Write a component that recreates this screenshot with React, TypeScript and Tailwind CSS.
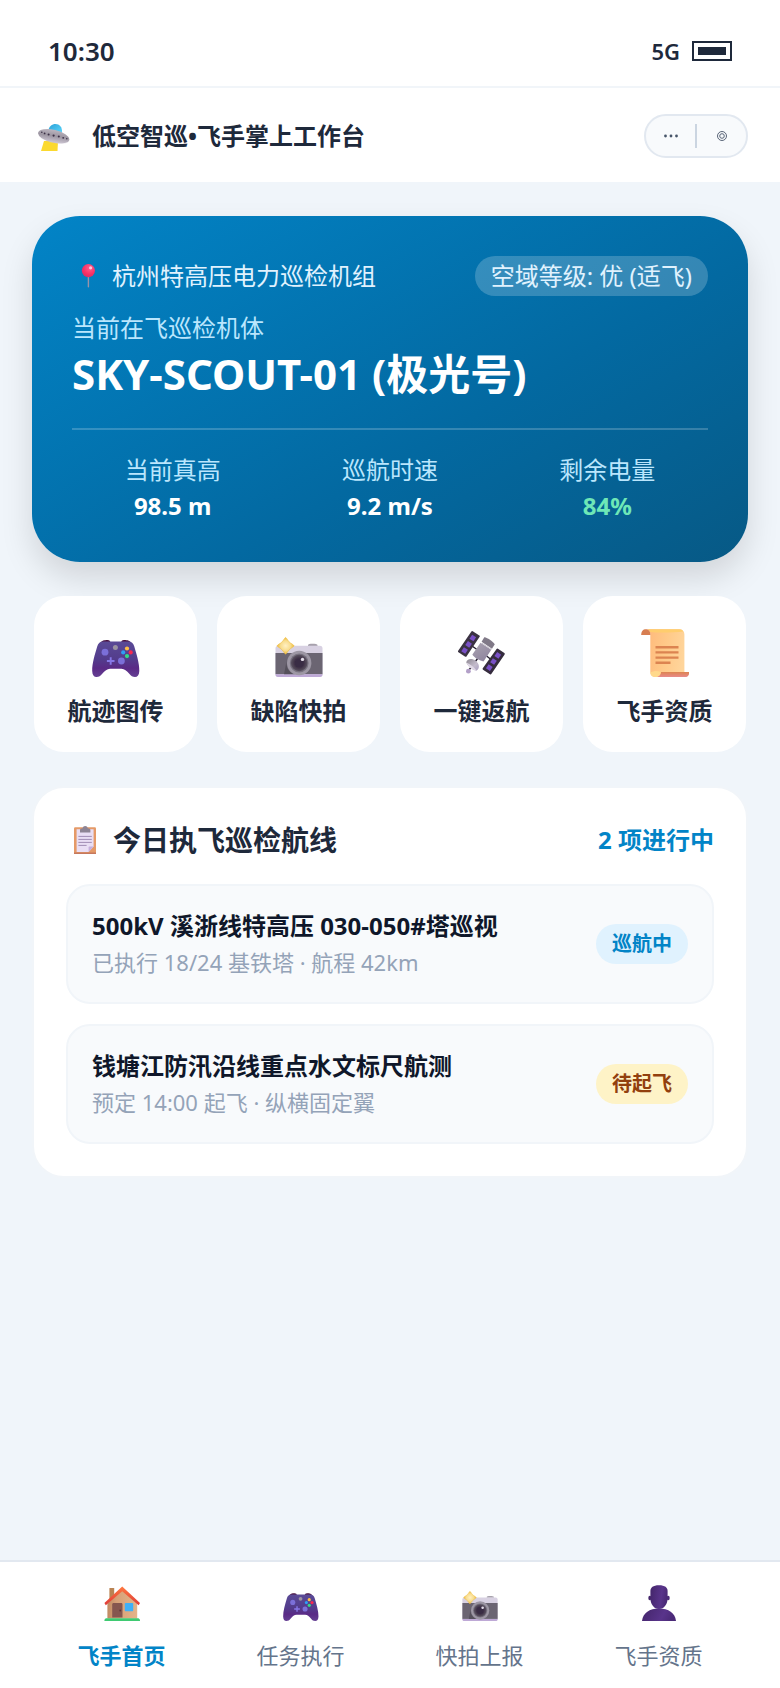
import React, { useState } from 'react';

type IconProps = { className?: string };

const UfoIcon = ({ className }: IconProps) => (
  <svg viewBox="0 0 32 32" className={className} aria-hidden="true">
    <defs>
      <linearGradient id="ufoDome" x1="0" y1="0" x2="1" y2="1">
        <stop offset="0" stopColor="#2b9fd6" />
        <stop offset="1" stopColor="#5fdcff" />
      </linearGradient>
      <linearGradient id="ufoDisc" x1="0" y1="0" x2="0.2" y2="1">
        <stop offset="0" stopColor="#c2bcc6" />
        <stop offset="0.55" stopColor="#9c95a1" />
        <stop offset="1" stopColor="#c9c2cf" />
      </linearGradient>
    </defs>
    <path d="M6 21 L20 21 L19.5 31 L3 31 Z" fill="#fbd92f" />
    <path d="M10 11.5 C11 6 14 4 17.5 4 C21.5 4 24.3 7 24 12 L23.5 15 L10 13 Z" fill="url(#ufoDome)" />
    <ellipse cx="15.7" cy="16.3" rx="16" ry="6.4" transform="rotate(13 15.7 16.3)" fill="url(#ufoDisc)" />
    <path d="M1 16.5 C5 21 19 26 30 22.5 C25 25 8 24 1 16.5 Z" fill="#ddd7e0" />
    <g fill="#3b3046">
      <circle cx="3.8" cy="12.2" r="0.8" />
      <circle cx="6.6" cy="13.4" r="0.9" />
      <circle cx="10.6" cy="14.6" r="1" />
      <circle cx="15.6" cy="15.6" r="1.1" />
      <circle cx="20.8" cy="16.6" r="1" />
      <circle cx="25.2" cy="17.8" r="0.9" />
      <circle cx="28.8" cy="18.8" r="0.8" />
    </g>
  </svg>
);

const PinIcon = ({ className }: IconProps) => (
  <svg viewBox="0 0 24 24" className={className} aria-hidden="true">
    <defs>
      <radialGradient id="pinHead" cx="0.6" cy="0.3" r="0.8">
        <stop offset="0" stopColor="#ff5d90" />
        <stop offset="0.6" stopColor="#f92f63" />
        <stop offset="1" stopColor="#c92e6b" />
      </radialGradient>
    </defs>
    <rect x="11.7" y="12" width="1.4" height="11.5" rx="0.7" fill="#9a93a8" />
    <circle cx="12.4" cy="6.6" r="6.6" fill="url(#pinHead)" />
    <circle cx="14.6" cy="3.8" r="1.6" fill="#ffc4d8" />
  </svg>
);

const GamepadIcon = ({ className }: IconProps) => (
  <svg viewBox="0 0 48 48" className={className} aria-hidden="true">
    <defs>
      <linearGradient id="padBody" x1="0" y1="0" x2="0" y2="1">
        <stop offset="0" stopColor="#5a4a96" />
        <stop offset="0.5" stopColor="#533c8c" />
        <stop offset="0.75" stopColor="#5a2a86" />
        <stop offset="1" stopColor="#653f93" />
      </linearGradient>
    </defs>
    <path d="M8 15 C9 11.5 12 11 15.5 11 C17.5 11 18.3 12 18.5 14 Z" fill="#4a123f" />
    <path d="M39.5 15 C38.5 11.5 35.5 11 32 11 C30 11 29.2 12 29 14 Z" fill="#4a123f" />
    <path
      d="M11 12.5 H36.5 C39.5 12.5 41.2 14 42.3 17.5 C44.5 25 47.5 34.5 47.3 42 C47.2 46 45.5 48 43 48 C40.5 48 39 46.8 37.5 45 C34.5 42 32.5 39.8 29.5 39.8 H18 C15 39.8 13 42 10 45 C8.5 46.8 7 48 4.5 48 C2 48 0.3 46 0.2 42 C0 34.5 3 25 5.2 17.5 C6.3 14 8 12.5 11 12.5 Z"
      fill="url(#padBody)"
    />
    <circle cx="13" cy="23.2" r="3.4" fill="#7b6fd8" />
    <circle cx="29.4" cy="32" r="3.4" fill="#7b6fd8" />
    <path d="M18.7 28.2 V35.8 M14.9 32 H22.5" stroke="#8677e6" strokeWidth="1.9" />
    <circle cx="23.4" cy="18.4" r="2.5" fill="#9a93a1" />
    <circle cx="35" cy="19.5" r="2.1" fill="#ffbe45" />
    <circle cx="31.2" cy="23.4" r="2.1" fill="#2f9df5" />
    <circle cx="38.7" cy="23.4" r="2.1" fill="#f8284f" />
    <circle cx="35" cy="27.1" r="2.1" fill="#35da86" />
  </svg>
);

const CameraIcon = ({ className }: IconProps) => (
  <svg viewBox="0 0 48 48" className={className} aria-hidden="true">
    <defs>
      <radialGradient id="camFlash">
        <stop offset="0" stopColor="#fff0c4" />
        <stop offset="0.6" stopColor="#f8dc8c" />
        <stop offset="1" stopColor="#efbc3c" />
      </radialGradient>
      <radialGradient id="camLens">
        <stop offset="0" stopColor="#5c4868" />
        <stop offset="0.6" stopColor="#413448" />
        <stop offset="1" stopColor="#5b5361" />
      </radialGradient>
    </defs>
    <path d="M33 17 V16 C33 15.2 35 14.8 37.5 14.8 C40 14.8 42.5 15.2 42.5 16 V17 Z" fill="#a7a1ac" />
    <rect x="0.5" y="16.8" width="47" height="31" rx="2.6" fill="#d8d1e2" />
    <rect x="0.5" y="24" width="47" height="21.2" fill="#6b6572" />
    <path d="M0.5 45.2 H47.5 C47.5 47 46.5 48 45 48 H3 C1.5 48 0.5 47 0.5 45.2 Z" fill="#bea9d6" />
    <path d="M12 30 C10 38 14 44 20 45.2 H9 Z" fill="#55505b" />
    <circle cx="24.2" cy="34" r="12.2" fill="#9d97a4" />
    <circle cx="24.2" cy="34" r="9.4" fill="#77717f" />
    <circle cx="24.2" cy="34" r="8.3" fill="url(#camLens)" />
    <circle cx="24.2" cy="34" r="4.6" fill="#392c44" />
    <circle cx="27.5" cy="30.4" r="1.7" fill="#e4dee9" />
    <path
      d="M10.6 8.5 C11.3 8.5 12.4 10.8 14 12.8 C15.8 14.6 19 15.8 19 16.8 C19 17.8 15.8 19 14 21 C12.4 22.8 11.3 25 10.6 25 C9.9 25 8.8 22.8 7.2 21 C5.4 19 2.2 17.8 2.2 16.8 C2.2 15.8 5.4 14.6 7.2 12.8 C8.8 10.8 9.9 8.5 10.6 8.5 Z"
      fill="url(#camFlash)"
      stroke="#eebd45"
      strokeWidth="0.6"
    />
  </svg>
);

const SatelliteIcon = ({ className }: IconProps) => (
  <svg viewBox="0 0 48 48" className={className} aria-hidden="true">
    <defs>
      <linearGradient id="satBody" x1="0" y1="0" x2="0.5" y2="1">
        <stop offset="0" stopColor="#aaa3b0" />
        <stop offset="1" stopColor="#9187a0" />
      </linearGradient>
      <linearGradient id="satDish" x1="0" y1="0" x2="1" y2="1">
        <stop offset="0" stopColor="#8d8891" />
        <stop offset="0.6" stopColor="#c4bccc" />
        <stop offset="1" stopColor="#a89dc0" />
      </linearGradient>
    </defs>
    <path d="M14 17 L19 20.5 M28 26.5 L33 30.5 M20 29 L17 33 M14 37 L11 41" stroke="#221b2c" strokeWidth="1.4" />
    <path d="M14.2 3 L20.8 7.3 L7.8 26.8 L1 22.3 Z" fill="#3b3343" stroke="#3b3343" strokeWidth="2" strokeLinejoin="round" />
    <path d="M39.4 20.5 L45.8 24.9 L32.5 44.5 L25.6 39.9 Z" fill="#352c3e" stroke="#352c3e" strokeWidth="2" strokeLinejoin="round" />
    <g fill="#7950c6">
      <rect x="12.4" y="6.6" width="4.8" height="4.8" transform="rotate(34 14.8 9)" />
      <rect x="8.2" y="12.9" width="4.8" height="4.8" transform="rotate(34 10.6 15.3)" />
      <rect x="4.2" y="19.1" width="4.8" height="4.8" transform="rotate(34 6.6 21.5)" />
      <rect x="37.4" y="23.9" width="4.8" height="4.8" transform="rotate(34 39.8 26.3)" />
      <rect x="33.1" y="30.1" width="4.8" height="4.8" transform="rotate(34 35.5 32.5)" />
      <rect x="28.9" y="36.3" width="4.8" height="4.8" transform="rotate(34 31.3 38.7)" />
    </g>
    <path d="M26.3 8.2 C28 7.6 37 13.5 36.6 15.5 L34 19.8 L23.6 12.8 Z" fill="#807987" />
    <path d="M22.5 13.8 L33.3 20.8 L25.5 32.4 C22 32 16 28.5 14.4 25.5 Z" fill="url(#satBody)" />
    <path d="M24 14.2 L33.6 20.4" stroke="#cbc5d0" strokeWidth="1" />
    <path d="M8.2 33.6 C8.8 29.5 14 28.8 18 32 C21.5 35 22 39.5 18.4 41.8 C14 41 10.5 38 8.2 33.6 Z" fill="url(#satDish)" />
    <path d="M8.2 33.6 C10.5 38 14 41 18.4 41.8 C17 39 12 35 8.2 33.6 Z" fill="#e0d9e6" />
    <circle cx="10.4" cy="42.2" r="2.4" fill="#b3a0c8" />
  </svg>
);

const ScrollIcon = ({ className }: IconProps) => (
  <svg viewBox="0 0 48 48" className={className} aria-hidden="true">
    <defs>
      <linearGradient id="scrollPaper" x1="0" y1="0.3" x2="1" y2="0.5">
        <stop offset="0" stopColor="#ffba7c" />
        <stop offset="0.5" stopColor="#ffc988" />
        <stop offset="1" stopColor="#ffd59b" />
      </linearGradient>
      <linearGradient id="scrollCurl" x1="0" y1="0" x2="0" y2="1">
        <stop offset="0" stopColor="#dd8450" />
        <stop offset="1" stopColor="#e88a8a" />
      </linearGradient>
    </defs>
    <path d="M5 0.2 H38 C41.5 0.2 43.4 2.2 43.4 5.5 V44 L18 47.9 H14 C11 47.9 9.3 46 9.3 43 V5.5 C9.3 2.5 8 0.2 5 0.2 Z" fill="url(#scrollPaper)" />
    <path d="M6 0.2 H38 C40 0.2 41.5 1 42.4 2.4 C33 3.5 20 4 9.2 3 C8.6 1.5 7.6 0.4 6 0.2 Z" fill="#ffcd6d" />
    <path d="M0.2 6 C0.2 2 2 0.2 5 0.2 C8 0.2 9.4 2.5 9.4 6 Z" fill="#d77e51" />
    <path d="M19.8 43 H48.3 C48.3 46.5 46.5 48 44 48 H14 C17.5 48 19.6 46.5 19.8 43 Z" fill="url(#scrollCurl)" />
    <path d="M14 48 C11.5 48 9.5 46.5 9.3 43.5 C13 41.5 17 41.5 19.8 43 C19.6 46.5 17.5 48 14 48 Z" fill="#ffd98c" />
    <path d="M14.5 18.3 H37.5 M14.5 23.4 H37.5 M14.5 28.6 H37.5 M14.5 33.8 H29.5" stroke="#dc8450" strokeWidth="2.4" />
  </svg>
);

const ClipboardIcon = ({ className }: IconProps) => (
  <svg viewBox="0 0 28 28" className={className} aria-hidden="true">
    <rect x="3" y="1.2" width="22" height="26.8" rx="1.2" fill="#e59a68" />
    <rect x="3" y="26.5" width="22" height="1.5" fill="#c6785d" />
    <path d="M5.6 3.2 H22.6 V20.5 L17.6 26 H5.6 Z" fill="#e9def4" />
    <path d="M22.6 20.5 L17.6 26 V21.5 C17.6 20.8 18 20.5 18.6 20.5 Z" fill="#c5aedc" />
    <path d="M9 6.6 V4.2 C9 2.8 10 2.4 11.6 2.2 C12 0.8 12.8 0 14.2 0 C15.6 0 16.4 0.8 16.8 2.2 C18.4 2.4 19.4 2.8 19.4 4.2 V6.6 Z" fill="#8d8494" />
    <path d="M7.4 10.4 H20.8 M7.4 13.4 H20.8 M7.4 16.4 H20.8 M7.4 19.4 H15.6" stroke="#a08cb4" strokeWidth="1" />
  </svg>
);

const HomeIcon = ({ className }: IconProps) => (
  <svg viewBox="0 0 36 36" className={className} aria-hidden="true">
    <defs>
      <linearGradient id="homeWall" x1="0" y1="0" x2="1" y2="0">
        <stop offset="0" stopColor="#c08a62" />
        <stop offset="0.3" stopColor="#d6a077" />
        <stop offset="1" stopColor="#e4b489" />
      </linearGradient>
      <linearGradient id="homeRoof" x1="0" y1="0" x2="0" y2="1">
        <stop offset="0" stopColor="#ff7a40" />
        <stop offset="1" stopColor="#de3a38" />
      </linearGradient>
    </defs>
    <rect x="5.4" y="3" width="4.8" height="14" rx="0.6" fill="#b98353" />
    <path d="M18.2 4.5 L33.2 18.5 V33.6 H3.4 V18.5 Z" fill="url(#homeWall)" />
    <path d="M18.2 1.5 L36 18 L34.6 20.2 L18.2 6.2 L1.8 20.2 L0.4 18 Z" fill="url(#homeRoof)" />
    <path d="M8.2 19.5 C8.2 18.5 8.8 18 9.6 18 H17 C18 18 18.5 18.5 18.5 19.5 V32.4 H8.2 Z" fill="#85564f" />
    <circle cx="16.2" cy="25.5" r="0.9" fill="#5f3437" />
    <rect x="20.8" y="18" width="8.4" height="8.2" rx="0.8" fill="#3fb0f7" />
    <path d="M2 33.2 H34.4 C35.6 33.6 36 34.6 36 36 H0.4 C0.4 34.6 0.8 33.6 2 33.2 Z" fill="#3fca72" />
  </svg>
);

const PersonIcon = ({ className }: IconProps) => (
  <svg viewBox="0 0 36 36" className={className} aria-hidden="true">
    <defs>
      <linearGradient id="personFill" x1="0" y1="0" x2="1" y2="0.2">
        <stop offset="0" stopColor="#43256a" />
        <stop offset="0.7" stopColor="#59348b" />
        <stop offset="1" stopColor="#4b2a78" />
      </linearGradient>
    </defs>
    <path d="M1 36 C2 28 8.5 23.6 18 23.6 C27.5 23.6 34 28 35 36 Z" fill="url(#personFill)" />
    <ellipse cx="8.8" cy="13" rx="1.5" ry="2.2" fill="#43256a" />
    <ellipse cx="27.2" cy="13" rx="1.5" ry="2.2" fill="#4b2a78" />
    <path
      d="M9.4 6 C9.4 2.5 12 0.2 18 0.2 C24 0.2 26.6 2.5 26.6 6 V13.5 C26.6 19 23 24 18 24 C13 24 9.4 19 9.4 13.5 Z"
      fill="url(#personFill)"
    />
  </svg>
);

const stats = [
  { label: '当前真高', value: '98.5 m', color: 'text-white' },
  { label: '巡航时速', value: '9.2 m/s', color: 'text-white' },
  { label: '剩余电量', value: '84%', color: 'text-[#6ee7b7]' },
];

const actions = [
  { label: '航迹图传', icon: GamepadIcon },
  { label: '缺陷快拍', icon: CameraIcon },
  { label: '一键返航', icon: SatelliteIcon },
  { label: '飞手资质', icon: ScrollIcon },
];

const routes = [
  {
    title: '500kV 溪浙线特高压 030-050#塔巡视',
    detail: '已执行 18/24 基铁塔 · 航程 42km',
    status: '巡航中',
    badge: 'bg-[#e0f2fe] text-[#0284c7]',
  },
  {
    title: '钱塘江防汛沿线重点水文标尺航测',
    detail: '预定 14:00 起飞 · 纵横固定翼',
    status: '待起飞',
    badge: 'bg-[#fef3c7] text-[#92400e]',
  },
];

const tabs = [
  { label: '飞手首页', icon: HomeIcon },
  { label: '任务执行', icon: GamepadIcon },
  { label: '快拍上报', icon: CameraIcon },
  { label: '飞手资质', icon: PersonIcon },
];

function App() {
  const [activeTab, setActiveTab] = useState(0);

  return (
    <div className="min-h-screen flex flex-col bg-[#f0f5fa] text-[#1e293b] font-['Noto_Sans','Noto_Sans_CJK_SC',sans-serif]">
      {/* Status bar */}
      <div className="flex items-center justify-between bg-white border-b-2 border-[#f1f5f9] px-12 pt-[31px] pb-[15px]">
        <span className="text-[26px] leading-10 font-semibold">10:30</span>
        <div className="flex items-center gap-3">
          <span className="text-[22px] leading-8 font-semibold">5G</span>
          <div className="w-10 h-5 border-2 border-[#1e293b] p-1">
            <div className="h-full bg-[#1e293b]"></div>
          </div>
        </div>
      </div>

      {/* Header */}
      <header className="flex items-center justify-between bg-white border-b-2 border-[#f0f5fa] px-8 pt-[26px] pb-6">
        <div className="flex items-center gap-[22px] pl-[6px]">
          <UfoIcon className="w-8 h-8" />
          <h1 className="text-2xl leading-8 font-bold">低空智巡•飞手掌上工作台</h1>
        </div>
        <div className="flex items-center h-11 w-[104px] rounded-full border-2 border-[#e2e8f0] bg-[#f8fafc] text-[#475569]">
          <button type="button" aria-label="更多" className="flex-1 flex justify-center">
            <svg viewBox="0 0 14 4" className="w-[14px] h-1" fill="currentColor">
              <circle cx="1.5" cy="2" r="1.4" />
              <circle cx="7" cy="2" r="1.4" />
              <circle cx="12.5" cy="2" r="1.4" />
            </svg>
          </button>
          <span className="w-[2px] h-6 bg-[#cbd5e1]"></span>
          <button type="button" aria-label="关闭" className="flex-1 flex justify-center">
            <svg viewBox="0 0 10 10" className="w-[10px] h-[10px]" fill="none" stroke="currentColor" strokeWidth="0.9">
              <circle cx="5" cy="5" r="4.5" />
              <circle cx="5" cy="5" r="2.3" />
            </svg>
          </button>
        </div>
      </header>

      <main className="flex-1 flex flex-col gap-8 p-8">
        {/* Aircraft card */}
        <section className="rounded-[48px] bg-[linear-gradient(150deg,#0284c7_0%,#0369a1_60%,#075985_100%)] p-10 shadow-[0_16px_32px_rgba(0,0,0,0.13)]">
          <div className="flex items-center justify-between text-2xl text-[#e0f2fe]">
            <div className="flex items-center gap-3 pl-1">
              <PinIcon className="w-6 h-6" />
              <span className="leading-8">杭州特高压电力巡检机组</span>
            </div>
            <span className="rounded-full bg-white/20 px-4 leading-10">空域等级: 优 (适飞)</span>
          </div>
          <p className="mt-4 text-2xl leading-8 text-[#bae6fd]">当前在飞巡检机体</p>
          <h2 className="mt-1 text-[42px] leading-[52px] font-bold text-white">SKY-SCOUT-01 (极光号)</h2>
          <dl className="mt-7 flex gap-4 border-t-2 border-white/20 pt-6 text-center text-2xl">
            {stats.map((stat) => (
              <div key={stat.label} className="flex-1">
                <dt className="leading-8 text-[#bae6fd]">{stat.label}</dt>
                <dd className={`mt-1 leading-8 font-bold ${stat.color}`}>{stat.value}</dd>
              </div>
            ))}
          </dl>
        </section>

        {/* Quick actions */}
        <div className="grid grid-cols-4 gap-4">
          {actions.map(({ label, icon: Icon }) => (
            <button
              key={label}
              type="button"
              className="flex flex-col items-center rounded-[32px] border-2 border-transparent bg-white bg-clip-padding pt-[33px] pb-6"
            >
              <Icon className="w-12 h-12" />
              <span className="mt-[18px] mb-px text-2xl leading-8 font-bold">{label}</span>
            </button>
          ))}
        </div>

        {/* Today's routes */}
        <section className="rounded-[32px] border-2 border-[#f1f5f9] bg-white p-8">
          <div className="flex items-center justify-between mb-6">
            <div className="flex items-center gap-[14px] pl-[5px]">
              <ClipboardIcon className="w-7 h-7" />
              <h2 className="text-[28px] leading-10 font-bold">今日执飞巡检航线</h2>
            </div>
            <span className="text-2xl leading-8 font-bold text-[#0284c7]">2 项进行中</span>
          </div>
          <ul className="flex flex-col gap-5">
            {routes.map((route) => (
              <li
                key={route.title}
                className="flex items-center justify-between rounded-3xl border-2 border-[#f1f5f9] bg-[#f8fafc] p-6"
              >
                <div>
                  <h3 className="text-2xl leading-8 font-bold text-[#0f172a]">{route.title}</h3>
                  <p className="mt-1 text-[22px] leading-8 text-[#94a3b8]">{route.detail}</p>
                </div>
                <span className={`shrink-0 rounded-full px-4 text-xl leading-10 font-bold ${route.badge}`}>
                  {route.status}
                </span>
              </li>
            ))}
          </ul>
        </section>
      </main>

      {/* Tab bar */}
      <nav className="grid grid-cols-4 border-t-2 border-[#e2e8f0] bg-white px-8 pt-[23px] pb-[17px]">
        {tabs.map(({ label, icon: Icon }, index) => (
          <button
            key={label}
            type="button"
            onClick={() => setActiveTab(index)}
            className={`flex flex-col items-center text-[22px] leading-8 ${
              index === activeTab ? 'font-bold text-[#0284c7]' : 'text-[#64748b]'
            }`}
          >
            <Icon className="w-9 h-9" />
            <span className="mt-[18px]">{label}</span>
          </button>
        ))}
      </nav>
    </div>
  );
}

export default App;
